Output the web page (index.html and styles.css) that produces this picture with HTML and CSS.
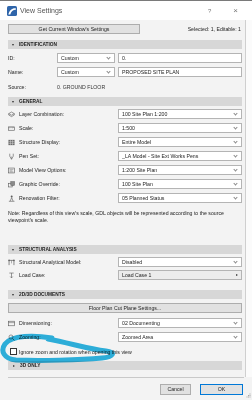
FILE: index.html
```html
<!DOCTYPE html>
<html lang="en">
<head>
    <meta charset="UTF-8">
    <meta name="viewport" content="width=device-width, initial-scale=1.0">
    <title>View Settings</title>
    <link rel="stylesheet" href="styles.css">
</head>
<body>
<div class="window">
    <div class="titlebar">
        <svg class="app-icon" width="10" height="10" viewBox="0 0 10 10">
            <rect width="10" height="10" rx="1.6" fill="#2f65aa"/>
            <path d="M1.4 8.6 C2.2 4.2 5.2 1.8 8.8 2.2 L8.8 3.8 C6 3.8 4 5.6 3.3 8.6 Z" fill="#fff"/>
        </svg>
        <span class="title">View Settings</span>
        <span class="help">?</span>
        <span class="close">&times;</span>
    </div>

    <div class="content">
        <div class="main">
            <div class="toprow">
                <div class="btn get">Get Current Window's Settings</div>
                <span class="selected">Selected: 1, Editable: 1</span>
            </div>

            <!-- Identification -->
            <div class="section-head open s-ident">IDENTIFICATION</div>
            <div class="row r-first">
                <span class="label short">ID:</span>
                <div class="select small">Custom</div>
                <div class="input">0.</div>
            </div>
            <div class="row">
                <span class="label short">Name:</span>
                <div class="select small">Custom</div>
                <div class="input">PROPOSED SITE PLAN</div>
            </div>
            <div class="row r-source">
                <span class="label short">Source:</span>
                <span class="value">0. GROUND FLOOR</span>
            </div>

            <!-- General -->
            <div class="section-head open s-general">GENERAL</div>
            <div class="row r-tight">
                <svg class="icon" viewBox="0 0 8 8"><path d="M0.8 3 L4 1.2 L7.2 3 L4 4.8 Z M0.8 4.6 L4 6.4 L7.2 4.6 M0.8 3 V4.6 M7.2 3 V4.6" fill="none" stroke="#5a5a5a" stroke-width="0.7"/></svg>
                <span class="label">Layer Combination:</span>
                <div class="select">100 Site Plan 1:200</div>
            </div>
            <div class="row">
                <svg class="icon" viewBox="0 0 8 8"><rect x="0.5" y="2.2" width="7" height="3.8" fill="none" stroke="#5a5a5a" stroke-width="0.7"/><path d="M2 2.2 V3.8 M3.5 2.2 V3.4 M5 2.2 V3.8 M6.3 2.2 V3.4" stroke="#5a5a5a" stroke-width="0.5"/></svg>
                <span class="label">Scale:</span>
                <div class="select">1:500</div>
            </div>
            <div class="row">
                <svg class="icon" viewBox="0 0 8 8"><rect x="0.5" y="1" width="7" height="6" fill="#6a6a6a"/><path d="M0.5 3 H7.5 M0.5 5 H7.5 M2.8 1 V7 M5.2 1 V7" stroke="#e8e8e8" stroke-width="0.5"/></svg>
                <span class="label">Structure Display:</span>
                <div class="select">Entire Model</div>
            </div>
            <div class="row">
                <svg class="icon" viewBox="0 0 8 8"><path d="M2 0.8 V3.6 L4 7.2 L6 3.6 V0.8" fill="none" stroke="#5a5a5a" stroke-width="0.7"/><path d="M4 4 V7" stroke="#5a5a5a" stroke-width="0.5"/></svg>
                <span class="label">Pen Set:</span>
                <div class="select">_LA Model - Site Ext Works Pens</div>
            </div>
            <div class="row">
                <svg class="icon" viewBox="0 0 8 8"><rect x="0.5" y="1.2" width="7" height="5.6" fill="none" stroke="#5a5a5a" stroke-width="0.7"/><path d="M1.8 3 H6.2 M1.8 4.4 H5 M1.8 5.6 H6.2" stroke="#5a5a5a" stroke-width="0.5"/></svg>
                <span class="label">Model View Options:</span>
                <div class="select">1:200 Site Plan</div>
            </div>
            <div class="row">
                <svg class="icon" viewBox="0 0 8 8"><rect x="0.6" y="2.6" width="4.2" height="4.2" fill="none" stroke="#5a5a5a" stroke-width="0.7"/><rect x="3.2" y="0.8" width="4.2" height="4.2" fill="#8a8a8a" stroke="#5a5a5a" stroke-width="0.6"/></svg>
                <span class="label">Graphic Override:</span>
                <div class="select">100 Site Plan</div>
            </div>
            <div class="row">
                <svg class="icon" viewBox="0 0 8 8"><circle cx="4.2" cy="1.8" r="1.1" fill="#5a5a5a"/><path d="M4.2 3 L2.4 7 M4.2 3 L5.8 7 M1 7.2 H7.4" fill="none" stroke="#5a5a5a" stroke-width="0.7"/></svg>
                <span class="label">Renovation Filter:</span>
                <div class="select">05 Planned Status</div>
            </div>
            <p class="note">Note: Regardless of this view's scale, GDL objects will be represented according to the source viewpoint's scale.</p>

            <!-- Structural analysis -->
            <div class="section-head open s-struct">STRUCTURAL ANALYSIS</div>
            <div class="row r-tight">
                <svg class="icon" viewBox="0 0 8 8"><path d="M1.2 7 V1.6 H6.8 V7" fill="none" stroke="#5a5a5a" stroke-width="0.8"/><path d="M4 1.6 V5" stroke="#5a5a5a" stroke-width="0.5"/><circle cx="1.2" cy="1.6" r="0.9" fill="#5a5a5a"/><circle cx="6.8" cy="1.6" r="0.9" fill="#5a5a5a"/></svg>
                <span class="label">Structural Analytical Model:</span>
                <div class="select">Disabled</div>
            </div>
            <div class="row r-tight">
                <svg class="icon" viewBox="0 0 8 8"><path d="M1.5 1.2 H6.5 M4 1.2 V6.6 M2.6 5.2 L4 6.8 L5.4 5.2" fill="none" stroke="#5a5a5a" stroke-width="0.7"/></svg>
                <span class="label">Load Case:</span>
                <div class="select grey">Load Case 1</div>
            </div>

            <!-- 2D/3D documents -->
            <div class="section-head open s-docs">2D/3D DOCUMENTS</div>
            <div class="btn floor">Floor Plan Cut Plane Settings...</div>
            <div class="row r-dim">
                <svg class="icon" viewBox="0 0 8 8"><rect x="0.5" y="1.4" width="7" height="5.2" fill="none" stroke="#5a5a5a" stroke-width="0.7"/><path d="M0.5 3 H7.5" stroke="#5a5a5a" stroke-width="0.6"/></svg>
                <span class="label">Dimensioning:</span>
                <div class="select">02 Documenting</div>
            </div>
            <div class="row">
                <svg class="icon" viewBox="0 0 8 8"><circle cx="3.4" cy="3.4" r="2.3" fill="none" stroke="#5a5a5a" stroke-width="0.7"/><path d="M5.1 5.1 L7.3 7.3" stroke="#5a5a5a" stroke-width="0.9"/></svg>
                <span class="label">Zooming:</span>
                <div class="select">Zoomed Area</div>
            </div>
            <div class="check-row">
                <span class="checkbox"></span>
                <span>Ignore zoom and rotation when opening this view</span>
            </div>

            <div class="section-head closed s-3d">3D ONLY</div>
        </div>
        <div class="scroll"></div>
    </div>

    <div class="footer">
        <div class="btn cancel">Cancel</div>
        <div class="btn ok">OK</div>
    </div>

    <!-- resize grip -->
    <svg class="grip" width="6" height="6" viewBox="0 0 6 6">
        <rect x="4.5" y="0.5" width="1" height="1" fill="#a8a8a8"/>
        <rect x="3" y="2" width="1" height="1" fill="#a8a8a8"/>
        <rect x="4.5" y="2" width="1" height="1" fill="#a8a8a8"/>
        <rect x="1.5" y="3.5" width="1" height="1" fill="#a8a8a8"/>
        <rect x="3" y="3.5" width="1" height="1" fill="#a8a8a8"/>
        <rect x="4.5" y="3.5" width="1" height="1" fill="#a8a8a8"/>
    </svg>

    <!-- marker annotation drawn over the screenshot -->
    <svg class="marker" width="252" height="400" viewBox="0 0 252 400">
        <path d="M52 338 C34 335 12 335 5 344 C0 351 4 359 16 360 C40 361 80 360 102 358 C114 357 116 352 106 351 C88 349 70 343 48 339"
              fill="none" stroke="#2fb6e3" stroke-width="5" stroke-linecap="round" stroke-linejoin="round"/>
    </svg>
</div>
</body>
</html>
```

FILE: styles.css
```css
/* View Settings dialog */
body {
    margin: 0;
    padding: 0;
    background-color: #f3f3f3;
}

.window {
    position: relative;
    width: 252px;
    height: 400px;
    overflow: hidden;
    background-color: #f3f3f3;
    font-family: "Liberation Sans", Arial, sans-serif;
    font-size: 5.2px;
    color: #1e1e1e;
}

/* title bar */
.titlebar {
    height: 20px;
    box-sizing: border-box;
    border-top: 1px solid #7a7a7a;
    background-color: #fff;
    display: flex;
    align-items: center;
    padding-left: 7px;
}

.app-icon {
    margin-right: 3px;
}

.title {
    font-size: 7px;
    color: #555;
}

.help {
    margin-left: auto;
    font-size: 6px;
    color: #777;
}

.close {
    margin-left: 22px;
    margin-right: 14px;
    font-size: 8px;
    color: #777;
}

/* scrolling area */
.content {
    display: flex;
    height: 357px;
}

.main {
    width: 245px;
    box-sizing: border-box;
    padding: 0 3px 0 8px;
}

.scroll {
    flex: 1;
    border-left: 1px solid #cfcfcf;
    background-color: #fbfbfb;
}

.toprow {
    display: flex;
    align-items: center;
    margin-top: 4px;
    height: 10px;
}

.btn {
    box-sizing: border-box;
    height: 10px;
    background-color: #e1e1e1;
    border: 1px solid #adadad;
    display: flex;
    align-items: center;
    justify-content: center;
}

.btn.get {
    width: 132px;
}

.selected {
    margin-left: auto;
    margin-right: 1px;
}

/* section headers */
.section-head {
    height: 9px;
    background-color: #d7d7d7;
    display: flex;
    align-items: center;
    padding-left: 4px;
    font-weight: bold;
    font-size: 4.8px;
}

.section-head::before {
    content: "";
    width: 0;
    height: 0;
    margin-right: 5px;
}

.section-head.open::before {
    border-left: 1.6px solid transparent;
    border-right: 1.6px solid transparent;
    border-top: 2.2px solid #333;
}

.section-head.closed::before {
    border-top: 1.6px solid transparent;
    border-bottom: 1.6px solid transparent;
    border-left: 2.2px solid #333;
    margin-left: 1px;
    margin-right: 5px;
}

.s-ident { margin-top: 6px; }
.s-general { margin-top: 5px; }
.s-struct { margin-top: 21px; }
.s-docs { margin-top: 10px; }
.s-3d { margin-top: 5px; }

/* rows */
.row {
    display: flex;
    align-items: center;
    height: 10px;
    margin-top: 4px;
}

.row.r-first { margin-top: 4px; }
.row.r-source { margin-top: 5px; }
.row.r-tight { margin-top: 3px; }
.row.r-dim { margin-top: 5px; }

.icon {
    width: 7px;
    height: 7px;
    margin-right: 4px;
    flex-shrink: 0;
}

.label {
    width: 99px;
}

.label.short {
    width: 49px;
}

.value {
    color: #333;
}

.select,
.input {
    box-sizing: border-box;
    height: 10px;
    background-color: #fff;
    border: 1px solid #b4b4b4;
    display: flex;
    align-items: center;
    padding-left: 3px;
    position: relative;
}

.select {
    width: 124px;
}

.select::after {
    content: "";
    position: absolute;
    right: 4px;
    top: 2px;
    width: 2px;
    height: 2px;
    border-right: 0.8px solid #8a8a8a;
    border-bottom: 0.8px solid #8a8a8a;
    transform: rotate(45deg);
}

.select.small {
    width: 58px;
}

.select.grey {
    background-color: #ececec;
}

.select.grey::after {
    border: none;
    transform: none;
    width: 0;
    height: 0;
    top: 3px;
    right: 3px;
    border-top: 1.5px solid transparent;
    border-bottom: 1.5px solid transparent;
    border-left: 2px solid #333;
}

.input {
    width: 124px;
    margin-left: 3px;
}

.note {
    margin: 7px 0 0 0;
    line-height: 7px;
}

.btn.floor {
    margin-top: 4px;
    width: 100%;
}

.check-row {
    display: flex;
    align-items: center;
    height: 9px;
    margin-top: 5px;
    padding-left: 2px;
}

.checkbox {
    box-sizing: border-box;
    width: 7px;
    height: 7px;
    border: 1px solid #333;
    background-color: #fff;
    margin-right: 2px;
}

/* footer */
.footer {
    margin: 0 8px 0 8px;
    border-top: 1px solid #c9c9c9;
    height: 23px;
    box-sizing: border-box;
    display: flex;
    justify-content: flex-end;
    align-items: center;
    gap: 9px;
    padding-right: 1px;
}

.btn.cancel {
    width: 31px;
    height: 11px;
}

.btn.ok {
    width: 43px;
    height: 11px;
    border-color: #0078d7;
}

.grip {
    position: absolute;
    right: 1px;
    bottom: 1px;
}

.marker {
    position: absolute;
    left: 0;
    top: 0;
    pointer-events: none;
    mix-blend-mode: multiply;
}
```
